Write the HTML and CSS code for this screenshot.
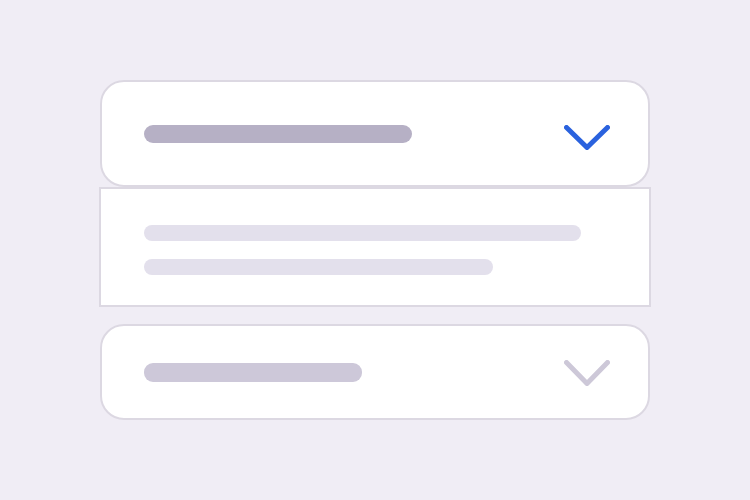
FILE: index.html
```html
<!DOCTYPE html>
<html>
<head>
<meta charset="utf-8">
<link rel="stylesheet" href="styles.css">
</head>
<body>
<div class="accordion">
  <div class="head head-open">
    <span class="bar bar-title"></span>
    <svg class="chev chev-open" width="46" height="25" viewBox="0 0 46 25"><path d="M2.5 2.5 L23 22.5 L43.5 2.5" fill="none" stroke-width="5" stroke-linecap="round" stroke-linejoin="round"/></svg>
  </div>
  <div class="panel">
    <span class="line line-long"></span>
    <span class="line line-short"></span>
  </div>
  <div class="head head-closed">
    <span class="bar bar-title2"></span>
    <svg class="chev chev-closed" width="46" height="26" viewBox="0 0 46 26"><path d="M2.5 2.5 L23 23.5 L43.5 2.5" fill="none" stroke-width="5" stroke-linecap="round" stroke-linejoin="round"/></svg>
  </div>
</div>
</body>
</html>
```

FILE: styles.css
```css
html, body {
  margin: 0;
  padding: 0;
  background: #f0edf5;
  width: 750px;
  height: 500px;
  overflow: hidden;
}
.accordion {
  display: flex;
  flex-direction: column;
  width: 550px;
  margin: 80px 0 0 100px;
}
.head {
  box-sizing: border-box;
  background: #ffffff;
  border: 2px solid #dcd8e2;
  border-radius: 24px;
  display: flex;
  align-items: center;
  justify-content: space-between;
  padding: 0 38px 0 42px;
}
.head-open {
  height: 107px;
}
.head-closed {
  height: 96px;
  margin-top: 17px;
}
.bar {
  display: block;
  height: 18px;
  border-radius: 9px;
}
.bar-title {
  width: 268px;
  background: #b6b0c5;
}
.bar-title2 {
  width: 218px;
  height: 19px;
  background: #cdc8d9;
}
.chev-open { stroke: #2a62de; margin-top: 7px; }
.chev-closed { stroke: #cdc8d8; margin-top: 1px; }
.panel {
  box-sizing: border-box;
  height: 120px;
  margin: 0 -1px;
  background: #ffffff;
  border: 2px solid #dcd8e2;
  display: flex;
  flex-direction: column;
  padding: 36px 0 0 43px;
  gap: 18px;
}
.line {
  display: block;
  height: 16px;
  border-radius: 8px;
  background: #e3e0ec;
}
.line-long { width: 437px; }
.line-short { width: 349px; }
```
